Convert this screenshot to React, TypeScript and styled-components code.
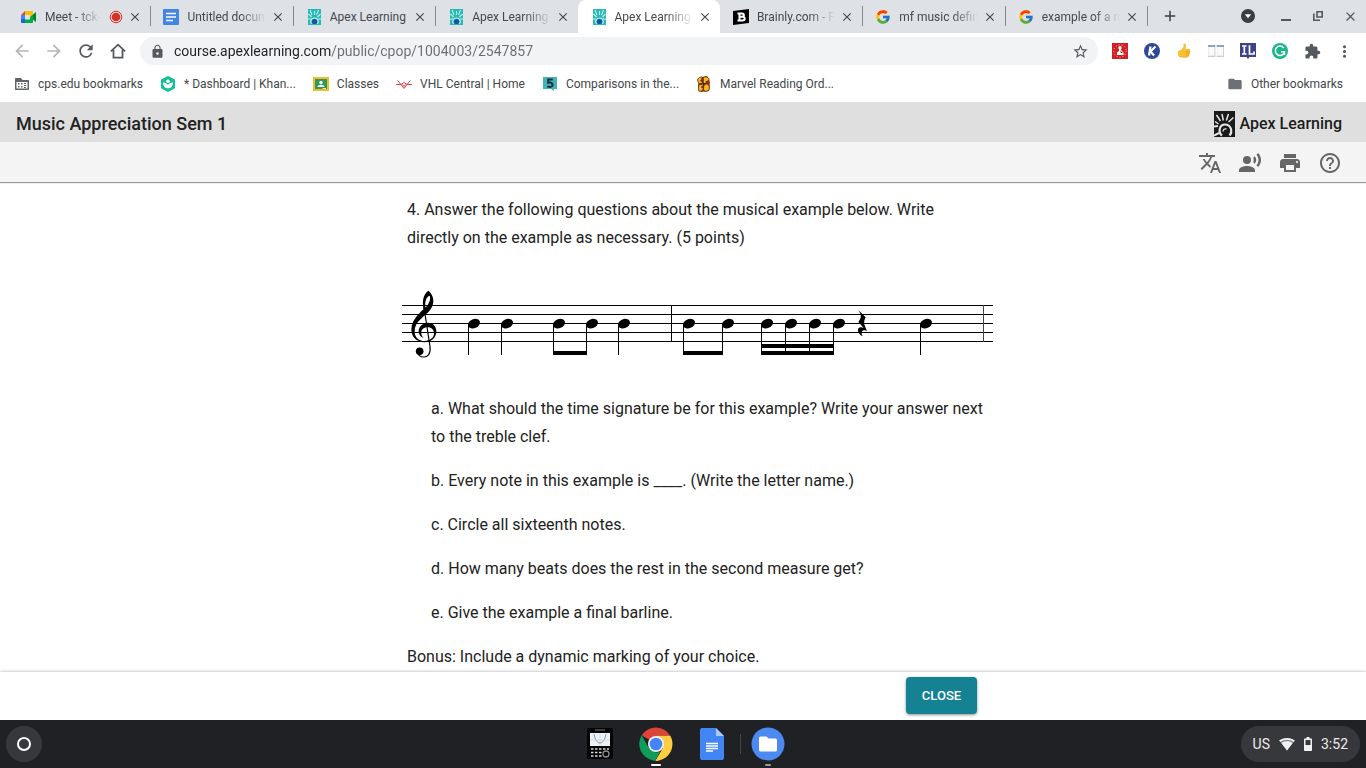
import React from 'react';
import styled, { createGlobalStyle } from 'styled-components';
import {
  MdAdd, MdArrowBack, MdArrowForward, MdClose, MdExtension, MdFolder, MdHelpOutline, MdLock,
  MdMoreVert, MdPrint, MdRecordVoiceOver, MdRefresh, MdStarBorder, MdTranslate,
} from 'react-icons/md';
import { FcGoogle } from 'react-icons/fc';

const GlobalStyle = createGlobalStyle`
  * { box-sizing: border-box; }
  body { margin: 0; font-family: Roboto, sans-serif; color: #222; background: #fff; }
  button { font: inherit; color: inherit; border: 0; padding: 0; margin: 0; background: none; cursor: pointer; }
  a { color: inherit; text-decoration: none; }
  svg { display: block; flex: none; }
`;

const Screen = styled.div`
  display: flex;
  flex-direction: column;
  height: 100vh;
`;

/* ---------- browser chrome ---------- */

const TabStrip = styled.div`
  display: flex;
  flex: none;
  height: 33px;
  padding-left: 8px;
  background: #dee1e6;
  color: #45494d;
`;

const Tabs = styled.div`
  display: flex;
  flex: 0 1 1139px;
  min-width: 0;
`;

const Tab = styled.div<{ $active?: boolean; $divider?: boolean }>`
  position: relative;
  display: flex;
  align-items: center;
  flex: 1 1 0;
  min-width: 0;
  padding: 0 7px 0 13px;
  border-radius: 8px 8px 0 0;
  background: ${p => (p.$active ? '#fff' : 'transparent')};
  &::after {
    content: '';
    position: absolute;
    right: -1px;
    top: 6px;
    width: 1px;
    height: 20px;
    background: ${p => (p.$divider ? '#85888d' : 'transparent')};
  }
`;

const TabButton = styled.button`
  display: flex;
  align-items: center;
  gap: 8px;
  flex: 1;
  min-width: 0;
  height: 32px;
  text-align: left;
`;

const TabTitle = styled.span<{ $fade: boolean }>`
  flex: 1;
  min-width: 0;
  overflow: hidden;
  white-space: nowrap;
  font-size: 12px;
  line-height: 16px;
  mask-image: ${p => (p.$fade ? 'linear-gradient(90deg, #000 calc(100% - 26px), transparent)' : 'none')};
`;

const TabClose = styled.button`
  display: flex;
  justify-content: center;
  width: 16px;
  margin-left: 4px;
`;

const IconButton = styled.button<{ $dim?: boolean }>`
  display: flex;
  align-items: center;
  justify-content: center;
  flex: none;
  width: 32px;
  height: 32px;
  color: ${p => (p.$dim ? '#b4b6b9' : '#55585c')};
`;

const NewTab = styled(IconButton)`
  margin-left: 7px;
  color: #3c4043;
`;

const WindowControls = styled.div`
  display: flex;
  margin-left: auto;
  & > :first-child { margin-right: 6px; }
`;

const Toolbar = styled.div`
  display: flex;
  align-items: center;
  flex: none;
  height: 36px;
  padding: 0 6px;
`;

const Omnibox = styled.label`
  display: flex;
  align-items: center;
  flex: 1;
  height: 28px;
  margin: 0 6px;
  padding: 0 2px 0 10px;
  border-radius: 14px;
  background: #f1f3f4;
  color: #55585c;
`;

const UrlInput = styled.input`
  flex: 1;
  min-width: 0;
  margin-left: 9px;
  padding: 0;
  border: 0;
  outline: 0;
  font: 14px/20px Roboto, sans-serif;
  color: transparent;
  background: linear-gradient(90deg, #202124 157px, #696d71 157px);
  background-clip: text;
  -webkit-background-clip: text;
`;

const Bookmarks = styled.nav`
  display: flex;
  flex: none;
  gap: 17px;
  height: 33px;
  padding: 0 23px 3px 14px;
`;

const Bookmark = styled.a`
  display: flex;
  align-items: center;
  gap: 8px;
  font-size: 12px;
  white-space: nowrap;
  color: #44474a;
  &:last-child { margin-left: auto; }
`;

/* ---------- course page ---------- */

const CourseHeader = styled.header`
  display: flex;
  align-items: center;
  justify-content: space-between;
  flex: none;
  height: 40px;
  padding: 4px 24px 0 16px;
  background: #dfdfdf;
`;

const CourseTitle = styled.h1`
  margin: 0;
  font-size: 18px;
  line-height: 24px;
  font-weight: 500;
`;

const Brand = styled.a`
  display: flex;
  align-items: center;
  gap: 4px;
  font-size: 16px;
  line-height: 24px;
  font-weight: 500;
  color: #1c1c1c;
`;

const ToolRow = styled.div`
  position: relative;
  display: flex;
  justify-content: flex-end;
  align-items: center;
  flex: none;
  height: 40px;
  padding: 2px 16px 0;
  background: #f4f4f4;
  box-shadow: 0 1px 1px #999;
`;

const ToolButton = styled.button`
  display: flex;
  align-items: center;
  justify-content: center;
  width: 40px;
  height: 36px;
  color: #666;
`;

const Scroll = styled.main`
  flex: 1;
  min-height: 0;
  overflow-y: auto;
`;

const Column = styled.div`
  max-width: 620px;
  margin: 0 auto;
  padding: 14px 0 0 29px;
`;

const Text = styled.p`
  margin: 0;
  padding: 0 5px;
  font-size: 16px;
  line-height: 28px;
`;

const Score = styled.svg`
  width: 100%;
  margin: 16px 0;
`;

const Parts = styled.div`
  display: flex;
  flex-direction: column;
  gap: 16px;
  padding-left: 24px;
  margin-bottom: 16px;
`;

const Footer = styled.footer`
  position: relative;
  flex: none;
  height: 48px;
  box-shadow: 0 0 3px rgba(0, 0, 0, 0.35);
  background: #fff;
`;

const FooterInner = styled.div`
  display: flex;
  justify-content: flex-end;
  max-width: 620px;
  margin: 0 auto;
  padding: 5px 16px;
`;

const CloseButton = styled.button`
  width: 71px;
  height: 37px;
  border-radius: 4px;
  background: #158294;
  color: #fff;
  font-size: 13px;
  font-weight: 500;
  box-shadow: 0 1px 3px rgba(0, 0, 0, 0.45);
`;

/* ---------- system shelf ---------- */

const Shelf = styled.div`
  position: relative;
  display: grid;
  grid-template-columns: 1fr auto 1fr;
  align-items: center;
  flex: none;
  height: 48px;
  padding: 0 6px;
  background: #202125;
`;

const Launcher = styled.button`
  display: flex;
  align-items: center;
  justify-content: center;
  width: 36px;
  height: 36px;
  border-radius: 50%;
  background: #37383b;
`;

const Apps = styled.div`
  display: flex;
  padding-left: 2px;
`;

const AppButton = styled.button<{ $running?: 'front' | 'back'; $divider?: boolean }>`
  position: relative;
  display: flex;
  align-items: center;
  justify-content: center;
  width: 56px;
  height: 48px;
  &::before {
    content: '';
    position: absolute;
    left: 0;
    top: 14px;
    width: 1px;
    height: 20px;
    background: ${p => (p.$divider ? '#45464a' : 'transparent')};
  }
  &::after {
    content: '';
    position: absolute;
    bottom: 2px;
    left: 50%;
    width: ${p => (p.$running === 'front' ? 10 : 6)}px;
    height: 2px;
    border-radius: 1px;
    transform: translateX(-50%);
    background: ${p => (p.$running === 'front' ? '#fff' : p.$running ? '#9a9b9d' : 'transparent')};
  }
`;

const Status = styled.button`
  display: flex;
  align-items: center;
  justify-self: end;
  gap: 9px;
  height: 36px;
  padding: 0 12px;
  border-radius: 18px;
  background: #37383b;
  color: #ececec;
  font-size: 14px;
`;

/* ---------- drawings ---------- */

const ApexMark = () => (
  <svg width="21" height="26" viewBox="0 0 21 26">
    <path fill="#1a1a1a" d="M0 0h21v26H0z" />
    <g stroke="#e6e6e6" fill="none">
      <path strokeWidth="1.500" d="M2.500 4l4 6M8 3l1.300 6.500M14.500 3L12.300 9.500M19.500 6.500L14.500 11M1 10.500l3.500 2.500" />
      <path strokeWidth="2" d="M0 15.500l4-.5M0 24.500l5-2.500" />
      <path strokeWidth="2.200" d="M8 24.500C4 21.500 5 13.500 11 13.500s8 7 4.500 11" />
      <path strokeWidth="1.300" d="M9 20.500c0-2 1.500-3 3.500-2.500" />
    </g>
  </svg>
);

const ApexFavicon = () => (
  <svg width="16" height="16" viewBox="0 0 16 16">
    <path fill="#25b9b5" d="M2 0h13v16H2z" />
    <g stroke="#c7f0ee" strokeWidth="1.1" fill="none">
      <path d="M4 1l2 5M8.500 2v4M12.500 1l-2 5M2.500 5l3 3M14.500 5l-3 3M2 10h3M15 10h-3" />
      <path d="M5.500 15c-2-3 0-6 3-6s5 3 3 6" />
    </g>
    <circle cx="8.500" cy="12.500" r="2.600" fill="#1d4fa8" />
  </svg>
);

const MeetIcon = () => (
  <svg width="16" height="16" viewBox="0 0 16 16">
    <path fill="#ea4335" d="M0 6l4-4v4z" />
    <path fill="#fbbc04" d="M4 2h7c.6 0 1 .4 1 1v3.500L9 8V6H4z" />
    <path fill="#4285f4" d="M0 6h4v4.500H0z" />
    <path fill="#1967d2" d="M0 10h4v4H1c-.6 0-1-.4-1-1z" />
    <path fill="#00ac47" d="M4 10.500h5V8l3-2.500V13c0 .6-.4 1-1 1H4z" />
    <path fill="#00832d" d="M12 5.500L15 3v10l-3-2.500z" />
  </svg>
);

const RecordIcon = () => (
  <svg width="14" height="14" viewBox="0 0 14 14">
    <circle cx="7" cy="7" r="4.300" fill="#d93025" />
    <circle cx="7" cy="7" r="5.800" fill="none" stroke="#d93025" />
  </svg>
);

const DocsFavicon = () => (
  <svg width="16" height="16" viewBox="0 0 16 16">
    <rect width="16" height="16" rx="1" fill="#4285e6" />
    <path stroke="#fff" strokeWidth="1.600" d="M3 4.500h10M3 8h10M3 11.500h7" />
  </svg>
);

const BrainlyIcon = () => (
  <svg width="16" height="16" viewBox="0 0 16 16">
    <path d="M0 2l16-2v14L0 16z" />
    <path fill="none" stroke="#fff" strokeWidth="2" d="M4.500 4.500h4.500c2.500 0 2.500 3.200 0 3.200H6.500h3c3 0 3 3.800 0 3.800H4.500M6.500 4.500v7" />
  </svg>
);

const DownCircle = () => (
  <svg width="14" height="14" viewBox="0 0 14 14">
    <circle cx="7" cy="7" r="7" fill="#3a3d41" />
    <path fill="#fff" d="M3.800 5.300h6.400L7 9.300z" />
  </svg>
);

const MinimizeIcon = () => (
  <svg width="10" height="10" viewBox="0 0 10 10"><path d="M0 8h10v2H0z" fill="currentColor" /></svg>
);

const RestoreIcon = () => (
  <svg width="10" height="10" viewBox="0 0 10 10" fill="none" stroke="currentColor" strokeWidth="1.600">
    <path d="M4 .8h5.200V6H4zM.8 2.500v6.700H7" />
  </svg>
);

const HomeIcon = () => (
  <svg width="16" height="16" viewBox="0 0 16 16" fill="none" stroke="currentColor" strokeWidth="1.800">
    <path d="M.9 8.400L8 1.700l7.100 6.700M3.500 7v7.600h9V7" />
  </svg>
);

const ManagedFolder = () => (
  <svg width="16" height="16" viewBox="0 0 16 16">
    <path fill="#606468" fillRule="evenodd" d="M2 2h5l1.500 2H14c.6 0 1 .4 1 1v8c0 .6-.4 1-1 1H2c-.6 0-1-.4-1-1V3c0-.6.4-1 1-1zm.500 4v6.500h11V6z" />
    <path fill="#606468" d="M4 7h1.500v1.500H4zM7 7h1.500v1.500H7zM4 10h1.500v1.500H4zM7 10h1.500v1.500H7zM10 7h2v1h-2zM10 9h2v1h-2zM10 11h2v1h-2z" />
  </svg>
);

const KhanIcon = () => (
  <svg width="16" height="16" viewBox="0 0 16 16">
    <path fill="#14bf96" d="M8 0l7 3.600v8.600L8 16l-7-3.800V3.600z" />
    <circle cx="8" cy="5.200" r="1.800" fill="#fff" />
    <path fill="#fff" d="M3 6.500c2.500 0 4.300 1 5 2.500.7-1.500 2.500-2.500 5-2.500 0 3.500-2 5.800-5 5.800S3 10 3 6.500z" />
  </svg>
);

const ClassroomIcon = () => (
  <svg width="16" height="14" viewBox="0 0 16 14">
    <path fill="#f3bd26" d="M0 0h16v14H0z" />
    <path fill="#2c9a5a" d="M2 2h12v10H2z" />
    <circle cx="8" cy="5.500" r="1.700" fill="#fff" />
    <path fill="#fff" d="M4.500 10c0-3 7-3 7 0z" />
    <path fill="#cfe5d2" d="M9.500 11H13v1H9.500z" />
  </svg>
);

const VhlIcon = () => (
  <svg width="16" height="16" viewBox="0 0 16 16" fill="none" stroke="#d4434f">
    <path d="M1.500 4.500l3.500 4M14.500 4.500L11 8.500M0 8.500h5l3 4 3-4h5M5 8.500l3-2 3 2M6.500 8.500l1.500 2 1.500-2" />
  </svg>
);

const FiveIcon = () => (
  <svg width="16" height="16" viewBox="0 0 16 16">
    <path fill="#43b5b0" d="M1 1h14v12h-3v2l-3-2H1z" />
    <path fill="none" stroke="#1f2c50" strokeWidth="2" d="M10.800 3.500H6.200v3.200c5-1 6 4.300 1.800 4.300-1 0-2-.2-2.800-.6" />
  </svg>
);

const MarvelIcon = () => (
  <svg width="16" height="16" viewBox="0 0 16 16">
    <path fill="#b02a1a" d="M3 2l8-2 3 6-1 9-8 1-3-6z" />
    <g fill="#f8b81c" stroke="#2c1606" strokeWidth=".7">
      <path d="M6.500 1C3 .5 1.200 3 1.700 5s2.300 3.500 4.800 2L6 5H4.500l1-1.500z" />
      <path d="M7.300 7.500V1.200C11.500 0 13.800 2 12.800 4.800L10 5.500v2z" />
      <path d="M2.500 9l4.800-1v2l-2 1 2 1.500c0 2-2.300 3.500-4.600 2.500z" />
      <path d="M8 9c3.500-2.500 6.500.5 5 4.500-2 3-5.500 2-5.500-1z" />
    </g>
  </svg>
);

const RedExtension = () => (
  <svg width="16" height="16" viewBox="0 0 16 16">
    <path fill="#cf2027" d="M0 0h16v16H0z" />
    <circle cx="8" cy="8" r="6.200" fill="none" stroke="#f7c9c4" strokeDasharray="1 2" />
    <circle cx="8" cy="4.800" r="1.700" fill="#fff" />
    <path fill="#fff" d="M7 5h2v2l2.500 2.500V12H5V9.500L7 8z" />
    <path fill="#5b1512" d="M8 7.500l3 2.500H9z" />
  </svg>
);

const KamiIcon = () => (
  <svg width="16" height="16" viewBox="0 0 16 16">
    <circle cx="8" cy="8" r="8" fill="#30479b" />
    <path fill="none" stroke="#fff" strokeWidth="2.200" d="M6.500 3.500L5 12.500M11.500 3.500L6.500 8.500l3.500 4" />
  </svg>
);

const ThumbIcon = () => (
  <svg width="16" height="16" viewBox="0 0 16 16">
    <path fill="#fbbf31" d="M5 7l2.500-3V1c0-1 2.500-1 2.500 1.500L9.500 6H13c1.500 0 1.500 1.800.7 2 .8.500.8 1.700 0 2 .5.700.300 1.600-.4 2 .2 1-.3 2-1.800 2H6c-1 0-2-.5-3-.5C1.500 12 1.500 9 3 7.500z" />
    <path fill="none" stroke="#e08b1d" strokeWidth=".6" d="M10 8.200h3.700M10 10.200h3.500M10 12.200h3M3 13.500c1 0 2 .8 3 .8h5.500" />
  </svg>
);

const DualPaneIcon = () => (
  <svg width="16" height="16" viewBox="0 0 16 16">
    <path fill="#ececec" d="M0 2h7.300v12H0zM8.700 2H16v12H8.700z" />
    <path fill="#fafafa" d="M1 4h5.500v8H1zM9.500 4H15v8H9.500z" />
    <path fill="#8ba3c2" d="M0 2h7.300v2H0zM8.700 2H16v2H8.700z" />
    <path fill="#c9cbcd" d="M0 13h7.300v1H0zM8.700 13H16v1H8.700zM6.500 4h.8v9h-.8zM15.200 4h.8v9h-.8z" />
  </svg>
);

const ImmersiveIcon = () => (
  <svg width="16" height="16" viewBox="0 0 16 16">
    <path fill="#3e4388" d="M0 0h16v14H9.500L8 16l-1.500-2H0z" />
    <path fill="none" stroke="#fff" strokeWidth="1.700" d="M2 3h4.500M2 11h4.500M4.300 3v8M9.500 2.200V11H14V8.500" />
  </svg>
);

const GrammarIcon = () => (
  <svg width="16" height="16" viewBox="0 0 16 16">
    <circle cx="8" cy="8" r="8" fill="#17b787" />
    <path fill="none" stroke="#fff" strokeWidth="1.500" d="M11.800 5A4.700 4.700 0 1 0 12.600 8.700H9M12.500 8.700v3.300" />
  </svg>
);

const CalculatorIcon = () => (
  <svg width="26" height="32" viewBox="0 0 26 32">
    <rect width="26" height="31" rx="2" fill="#050505" />
    <path stroke="#777" d="M8 2h10" />
    <path fill="#eef2f5" d="M3 5h20v13H3z" />
    <path fill="none" stroke="#5f83ad" strokeWidth=".8" d="M7 6c2 12 10 12 12 0" />
    <path fill="none" stroke="#b5c7d8" strokeWidth=".5" d="M13 5v13M3 12h20" />
    <path stroke="#d9d9d9" strokeWidth="1.300" strokeDasharray="2.500 1.500" d="M4 21h18M4 24.500h12M4 28h12" />
    <circle cx="19" cy="26" r="3" fill="none" stroke="#8c8c8c" strokeWidth="1.300" />
  </svg>
);

const ChromeIcon = () => (
  <svg width="34" height="34" viewBox="0 0 34 34">
    <path fill="#db4437" d="M17 17L2.700 8.200A16.700 16.700 0 0 1 31.300 8.800H17z" />
    <path fill="#0f9d58" d="M17 17l-3 16.400A16.700 16.700 0 0 1 2.700 8.200L9.800 21z" />
    <path fill="#ffcd40" d="M17 8.800h14.300A16.700 16.700 0 0 1 16.600 33.700l7.500-12.500z" />
    <path fill="#0f9d58" d="M9.800 21.200L17 25.500l4-.8-4.700 9-2.300-.3z" />
    <path fill="#ffcd40" d="M24 21l-7.400 12.700h2L26 24z" />
    <circle cx="17" cy="17" r="8" fill="#f1f1f1" />
    <circle cx="17" cy="17" r="6.300" fill="#4285f4" />
  </svg>
);

const DocsAppIcon = () => (
  <svg width="24" height="32" viewBox="0 0 24 32">
    <path fill="#4285f4" d="M2 0h14l8 8v22a2 2 0 0 1-2 2H2a2 2 0 0 1-2-2V2a2 2 0 0 1 2-2z" />
    <path fill="#a9c7fb" d="M16 0l8 8h-8z" />
    <path stroke="#fff" strokeWidth="1.400" d="M6 15.500h12M6 18h12M6 20.500h12M6 23h7" />
  </svg>
);

const FilesAppIcon = () => (
  <svg width="34" height="34" viewBox="0 0 34 34">
    <circle cx="17" cy="17" r="16.500" fill="#4d8af0" />
    <path fill="#fff" d="M9.500 9.500h6l2 2h7A1.500 1.500 0 0 1 26 13v10a1.500 1.500 0 0 1-1.500 1.500h-15A1.500 1.500 0 0 1 8 23V11a1.500 1.500 0 0 1 1.500-1.500z" />
  </svg>
);

const WifiIcon = () => (
  <svg width="16" height="14" viewBox="0 0 16 14">
    <path fill="#8b8c8e" d="M8 1c3 0 5.500.9 7.800 2.600L8 13.500.2 3.600C2.500 1.900 5 1 8 1z" />
    <path fill="#f1f1f1" d="M8 1c3 0 5.500.9 7.800 2.600l-1 1.300C12.500 3.400 10.500 2.700 8 2.700s-4.500.7-6.800 2.200l-1-1.300C2.500 1.900 5 1 8 1z" />
    <path fill="#f1f1f1" d="M8 4.200c2.200 0 4 .6 5.700 1.900L8 13.500 2.300 6.100C4 4.800 5.800 4.200 8 4.200z" />
  </svg>
);

const BatteryIcon = () => (
  <svg width="8" height="14" viewBox="0 0 8 14">
    <path fill="#f1f1f1" fillRule="evenodd" d="M2.500 0h3v1.500H7c.6 0 1 .4 1 1V13c0 .6-.4 1-1 1H1c-.6 0-1-.4-1-1V2.500c0-.6.4-1 1-1h1.500zM1.500 3v5h5V3z" />
  </svg>
);

/* ---------- the musical example ---------- */

const staffLines = [37, 46, 55, 64, 73];
const notes = [66, 99, 151, 184, 216, 281, 320, 359, 383, 407, 431, 518];
const beams = [
  { x: 151, w: 34, y: 83 },
  { x: 281, w: 40, y: 83 },
  { x: 359, w: 73, y: 76 },
  { x: 359, w: 73, y: 83 },
];

const MusicExample = () => (
  <Score viewBox="0 0 591 111" role="img" aria-label="Two measures of music on a treble staff">
    {staffLines.map(y => <rect key={y} x="0" y={y} width="591" height="1" />)}
    <rect x="269" y="37" width="1" height="37" />
    <rect x="581" y="37" width="1" height="37" fill="#444" />
    {notes.map(x => (
      <g key={x}>
        <rect x={x} y="56" width="1" height="31" />
        <ellipse cx={x + 6} cy="55.600" rx="6.200" ry="4.500" transform={`rotate(-22 ${x + 6} 55.600)`} />
      </g>
    ))}
    {beams.map(b => <rect key={`${b.x}-${b.y}`} x={b.x} y={b.y} width={b.w} height="4" />)}
    <g transform="translate(-7 12) scale(.33333)">
      <path d="M100 32C84 44 81 62 86 92L92 86C88 64 94 50 104 47C108 57 103 70 92 82C80 94 50 116 49 148C49 172 66 187 88 187C108 187 124 174 124 154C124 138 112 128 99 128C84 128 71 140 71 154C71 164 78 172 86 174C80 168 78 162 79 156C80 147 88 142 98 142C110 142 117 150 117 160C117 174 104 183 89 183C70 183 58 170 59 152C60 130 76 118 93 103C109 89 115 76 115 62C115 49 108 38 100 32Z" />
      <path fill="none" stroke="#000" strokeWidth="3.500" d="M87 82L105 200C108 222 98 231 86 231C76 231 70 226 68 218" />
      <circle cx="74" cy="214" r="11.500" />
    </g>
    <path
      transform="translate(293 12) scale(.33333)"
      d="M490 90L512 112C506 124 505 132 516 152C503 147 495 154 503 169C490 164 483 146 495 142C499 141 502 142 506 144L490 126C499 114 501 106 490 90Z"
    />
  </Score>
);

/* ---------- data ---------- */

const tabs = [
  { title: 'Meet - tck-c', icon: <MeetIcon />, fade: true, recording: true, divider: true },
  { title: 'Untitled docum', icon: <DocsFavicon />, fade: true, divider: true },
  { title: 'Apex Learning', icon: <ApexFavicon />, fade: false, divider: true },
  { title: 'Apex Learning', icon: <ApexFavicon />, fade: true },
  { title: 'Apex Learning', icon: <ApexFavicon />, fade: true, active: true },
  { title: 'Brainly.com - F', icon: <BrainlyIcon />, fade: true, divider: true },
  { title: 'mf music defin', icon: <FcGoogle size={16} />, fade: true, divider: true },
  { title: 'example of a m', icon: <FcGoogle size={16} />, fade: true, divider: true },
];

const bookmarks = [
  { label: 'cps.edu bookmarks', icon: <ManagedFolder /> },
  { label: '* Dashboard | Khan...', icon: <KhanIcon /> },
  { label: 'Classes', icon: <ClassroomIcon /> },
  { label: 'VHL Central | Home', icon: <VhlIcon /> },
  { label: 'Comparisons in the...', icon: <FiveIcon /> },
  { label: 'Marvel Reading Ord...', icon: <MarvelIcon /> },
  { label: 'Other bookmarks', icon: <MdFolder size={16} color="#6d7074" /> },
];

const extensions = [
  { label: 'Reader', icon: <RedExtension /> },
  { label: 'Kami', icon: <KamiIcon /> },
  { label: 'Thumbs up', icon: <ThumbIcon /> },
  { label: 'Dualless', icon: <DualPaneIcon /> },
  { label: 'Imagine Learning', icon: <ImmersiveIcon /> },
  { label: 'Grammarly', icon: <GrammarIcon /> },
  { label: 'Extensions', icon: <MdExtension size={17} /> },
  { label: 'Menu', icon: <MdMoreVert size={19} /> },
];

const parts = [
  'a. What should the time signature be for this example? Write your answer next to the treble clef.',
  'b. Every note in this example is ____. (Write the letter name.)',
  'c. Circle all sixteenth notes.',
  'd. How many beats does the rest in the second measure get?',
  'e. Give the example a final barline.',
];

export default function App() {
  return (
    <Screen>
      <GlobalStyle />
      <TabStrip>
        <Tabs>
          {tabs.map((t, i) => (
            <Tab key={i} $active={t.active} $divider={t.divider}>
              <TabButton>
                {t.icon}
                <TabTitle $fade={t.fade}>{t.title}</TabTitle>
                {t.recording && <RecordIcon />}
              </TabButton>
              <TabClose aria-label="Close tab"><MdClose size={14} /></TabClose>
            </Tab>
          ))}
        </Tabs>
        <NewTab aria-label="New tab"><MdAdd size={18} /></NewTab>
        <WindowControls>
          <IconButton aria-label="Search tabs"><DownCircle /></IconButton>
          <IconButton aria-label="Minimize"><MinimizeIcon /></IconButton>
          <IconButton aria-label="Restore"><RestoreIcon /></IconButton>
          <IconButton aria-label="Close window"><MdClose size={15} /></IconButton>
        </WindowControls>
      </TabStrip>

      <Toolbar>
        <IconButton $dim aria-label="Back"><MdArrowBack size={20} /></IconButton>
        <IconButton $dim aria-label="Forward"><MdArrowForward size={20} /></IconButton>
        <IconButton aria-label="Reload"><MdRefresh size={20} /></IconButton>
        <IconButton aria-label="Home"><HomeIcon /></IconButton>
        <Omnibox>
          <MdLock size={15} />
          <UrlInput aria-label="Address" defaultValue="course.apexlearning.com/public/cpop/1004003/2547857" />
          <IconButton aria-label="Bookmark this page"><MdStarBorder size={17} /></IconButton>
        </Omnibox>
        {extensions.map(e => <IconButton key={e.label} aria-label={e.label}>{e.icon}</IconButton>)}
      </Toolbar>

      <Bookmarks>
        {bookmarks.map(b => <Bookmark key={b.label} href="#">{b.icon}{b.label}</Bookmark>)}
      </Bookmarks>

      <CourseHeader>
        <CourseTitle>Music Appreciation Sem 1</CourseTitle>
        <Brand href="#">
          <ApexMark />
          Apex Learning
        </Brand>
      </CourseHeader>
      <ToolRow>
        <ToolButton aria-label="Translate"><MdTranslate size={24} /></ToolButton>
        <ToolButton aria-label="Read aloud"><MdRecordVoiceOver size={24} /></ToolButton>
        <ToolButton aria-label="Print"><MdPrint size={24} /></ToolButton>
        <ToolButton aria-label="Help"><MdHelpOutline size={24} /></ToolButton>
      </ToolRow>

      <Scroll>
        <Column>
          <Text>
            4. Answer the following questions about the musical example below. Write directly on the
            example as necessary. (5 points)
          </Text>
          <MusicExample />
          <Parts>
            {parts.map(p => <Text key={p}>{p}</Text>)}
          </Parts>
          <Text>Bonus: Include a dynamic marking of your choice.</Text>
        </Column>
      </Scroll>

      <Footer>
        <FooterInner><CloseButton>CLOSE</CloseButton></FooterInner>
      </Footer>

      <Shelf>
        <Launcher aria-label="Launcher">
          <svg width="14" height="14" viewBox="0 0 14 14">
            <circle cx="7" cy="7" r="6" fill="none" stroke="#fff" strokeWidth="2" />
          </svg>
        </Launcher>
        <Apps>
          <AppButton aria-label="Calculator"><CalculatorIcon /></AppButton>
          <AppButton aria-label="Chrome" $running="front"><ChromeIcon /></AppButton>
          <AppButton aria-label="Docs"><DocsAppIcon /></AppButton>
          <AppButton aria-label="Files" $running="back" $divider><FilesAppIcon /></AppButton>
        </Apps>
        <Status>
          <span>US</span>
          <WifiIcon />
          <BatteryIcon />
          <span>3:52</span>
        </Status>
      </Shelf>
    </Screen>
  );
}
